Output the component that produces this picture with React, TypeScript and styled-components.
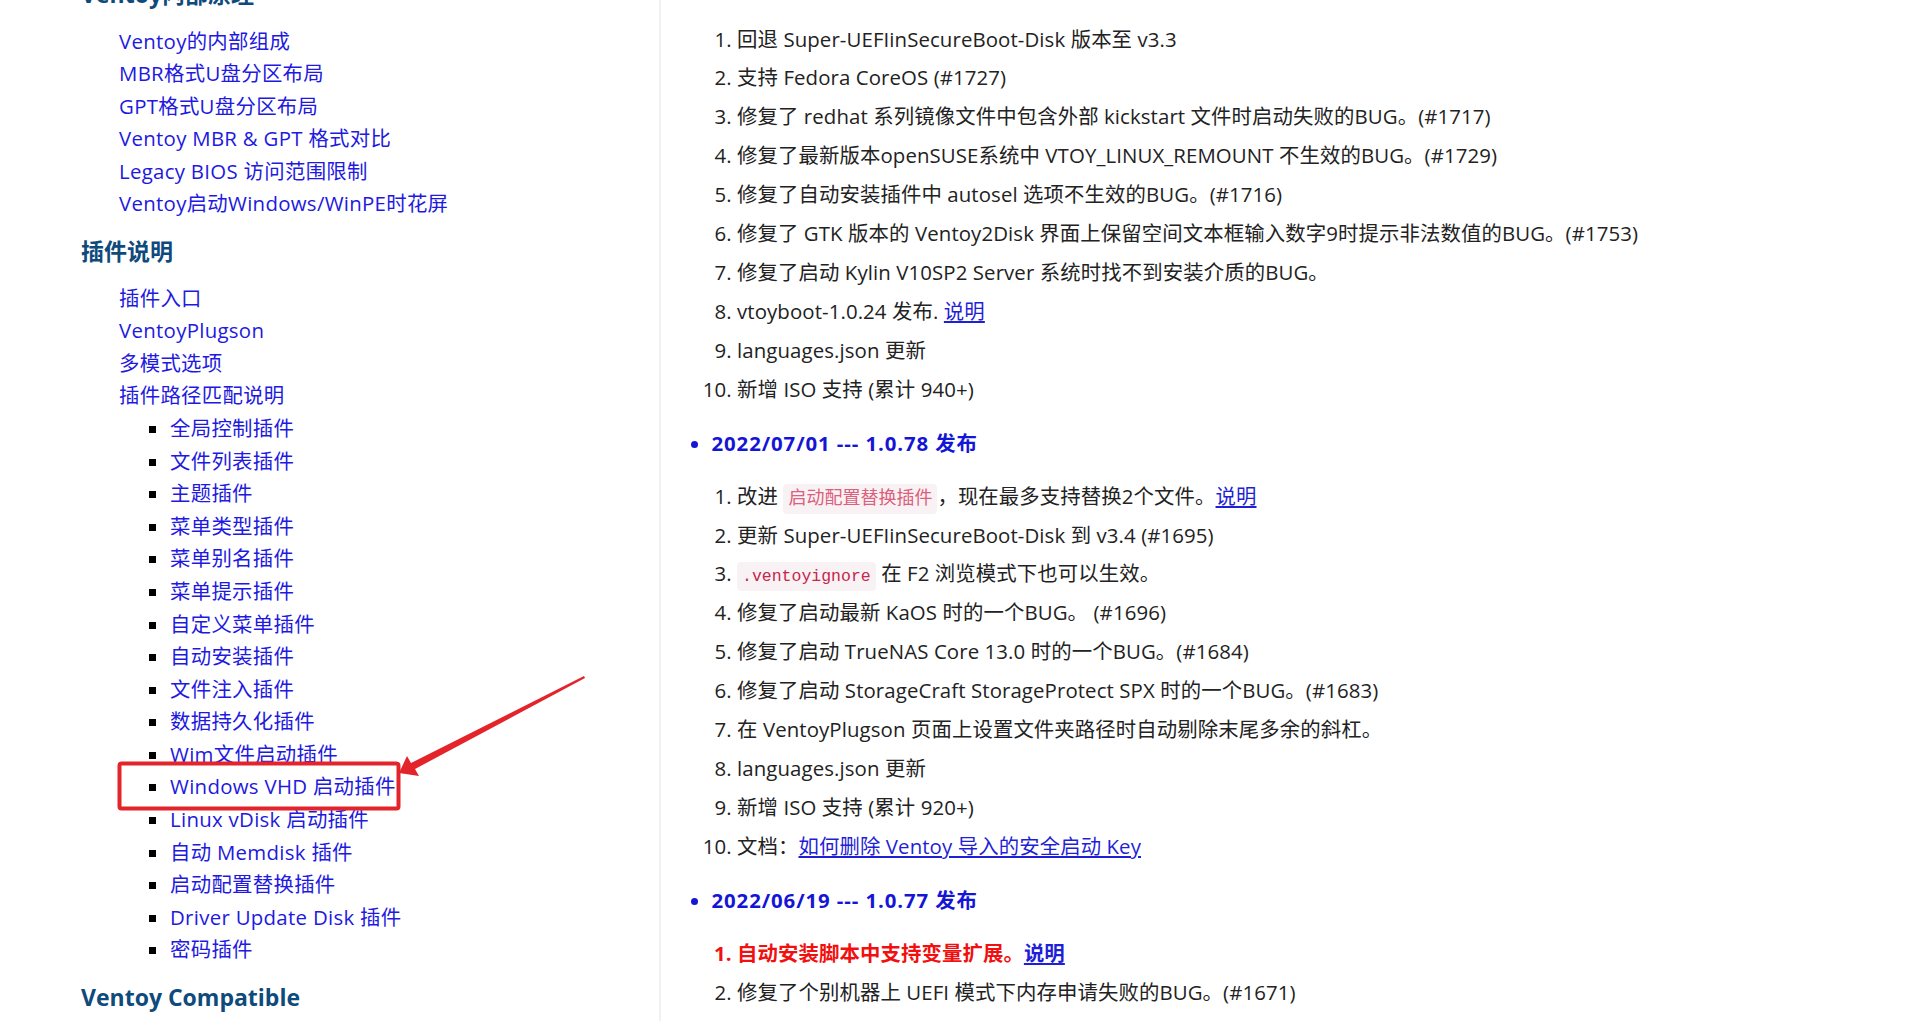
import React from 'react';
import styled, { createGlobalStyle } from 'styled-components';

const GlobalStyle = createGlobalStyle`
  html, body {
    margin: 0;
    padding: 0;
    background: #ffffff;
    overflow: hidden;
  }
  body {
    font-family: "Open Sans", "Noto Sans CJK SC", sans-serif;
  }
`;

const Page = styled.div`
  position: relative;
  display: flex;
  width: 1920px;
  height: 1021px;
  overflow: hidden;
  font-size: 20.4px;
  letter-spacing: 0.1px;
  color: #222222;
`;

const Sidebar = styled.nav`
  flex: none;
  width: 661px;
  box-sizing: border-box;
  border-right: 2px solid #f1f1f1;
  padding-left: 81px;
`;

const SidebarInner = styled.div`
  margin-top: -37px;
`;

const SideHeading = styled.h3`
  margin: 16px 0 15.5px;
  font-size: 23px;
  line-height: 30px;
  font-weight: 700;
  letter-spacing: 0;
  color: #0f4a7d;
`;

const SideList = styled.ul`
  margin: 0;
  padding-left: 38px;
  list-style: none;
`;

const SubList = styled.ul`
  margin: 0;
  padding-left: 51px;
  list-style: square;
  color: #000000;
`;

const SideItem = styled.li`
  line-height: 32.6px;
  letter-spacing: 0.3px;
`;

const SideLink = styled.a`
  color: #2219e0;
  text-decoration: none;
`;

const Content = styled.main`
  flex: 1;
  padding-top: 5.5px;
`;

const ReleaseList = styled.ul`
  margin: 0;
  padding-left: 50.5px;
  color: #1515d6;
`;

const Release = styled.li<{ $plain?: boolean }>`
  margin-top: ${(p) => (p.$plain ? '14px' : '15px')};
  list-style: ${(p) => (p.$plain ? 'none' : 'disc')};
`;

const ReleaseTitle = styled.strong`
  display: block;
  line-height: 38.9px;
  font-weight: 700;
  letter-spacing: 0.9px;
`;

const ChangeList = styled.ol<{ $afterTitle?: boolean }>`
  margin: ${(p) => (p.$afterTitle ? '14.2px' : '1px')} 0 0;
  padding-left: 25.5px;
  color: #222222;
`;

const Change = styled.li<{ $accent?: boolean }>`
  line-height: 38.9px;
  color: ${(p) => (p.$accent ? '#f20f0f' : '#222222')};
  font-weight: ${(p) => (p.$accent ? 700 : 400)};
`;

const TextLink = styled.a`
  color: #1f1fd6;
  text-decoration: underline;
  text-underline-offset: 2px;
`;

const Code = styled.code<{ $cjk?: boolean }>`
  font-family: "Liberation Mono", "Noto Sans CJK SC", monospace;
  font-size: ${(p) => (p.$cjk ? '18px' : '16.5px')};
  line-height: 1;
  letter-spacing: 0;
  color: ${(p) => (p.$cjk ? '#dc5f7c' : '#c7254e')};
  background: #f9f2f4;
  padding: 5px 5px;
  border-radius: 4px;
`;

const Overlay = styled.svg`
  position: absolute;
  left: 0;
  top: 0;
  width: 1920px;
  height: 1021px;
  pointer-events: none;
`;

type Item = { label: string; children?: string[] };

const internals: Item[] = [
  { label: 'Ventoy的内部组成' },
  { label: 'MBR格式U盘分区布局' },
  { label: 'GPT格式U盘分区布局' },
  { label: 'Ventoy MBR & GPT 格式对比' },
  { label: 'Legacy BIOS 访问范围限制' },
  { label: 'Ventoy启动Windows/WinPE时花屏' },
];

const plugins: Item[] = [
  { label: '插件入口' },
  { label: 'VentoyPlugson' },
  { label: '多模式选项' },
  {
    label: '插件路径匹配说明',
    children: [
      '全局控制插件',
      '文件列表插件',
      '主题插件',
      '菜单类型插件',
      '菜单别名插件',
      '菜单提示插件',
      '自定义菜单插件',
      '自动安装插件',
      '文件注入插件',
      '数据持久化插件',
      'Wim文件启动插件',
      'Windows VHD 启动插件',
      'Linux vDisk 启动插件',
      '自动 Memdisk 插件',
      '启动配置替换插件',
      'Driver Update Disk 插件',
      '密码插件',
    ],
  },
];

const SideSection: React.FC<{ title: string; items?: Item[] }> = ({ title, items }) => (
  <>
    <SideHeading>{title}</SideHeading>
    {items && (
      <SideList>
        {items.map((it) => (
          <SideItem key={it.label}>
            <SideLink href="#">{it.label}</SideLink>
            {it.children && (
              <SubList>
                {it.children.map((c) => (
                  <SideItem key={c}>
                    <SideLink href="#">{c}</SideLink>
                  </SideItem>
                ))}
              </SubList>
            )}
          </SideItem>
        ))}
      </SideList>
    )}
  </>
);

export default function App() {
  return (
    <>
      <GlobalStyle />
      <Page>
        <Sidebar>
          <SidebarInner>
            <SideSection title="Ventoy内部原理" items={internals} />
            <SideSection title="插件说明" items={plugins} />
            <SideSection title="Ventoy Compatible" />
          </SidebarInner>
        </Sidebar>
        <Content>
          <ReleaseList>
            <Release $plain>
              <ChangeList>
                <Change>回退 Super-UEFIinSecureBoot-Disk 版本至 v3.3</Change>
                <Change>支持 Fedora CoreOS (#1727)</Change>
                <Change>修复了 redhat 系列镜像文件中包含外部 kickstart 文件时启动失败的BUG。(#1717)</Change>
                <Change>修复了最新版本openSUSE系统中 VTOY_LINUX_REMOUNT 不生效的BUG。(#1729)</Change>
                <Change>修复了自动安装插件中 autosel 选项不生效的BUG。(#1716)</Change>
                <Change>修复了 GTK 版本的 Ventoy2Disk 界面上保留空间文本框输入数字9时提示非法数值的BUG。(#1753)</Change>
                <Change>修复了启动 Kylin V10SP2 Server 系统时找不到安装介质的BUG。</Change>
                <Change>
                  vtoyboot-1.0.24 发布. <TextLink href="#">说明</TextLink>
                </Change>
                <Change>languages.json 更新</Change>
                <Change>新增 ISO 支持 (累计 940+)</Change>
              </ChangeList>
            </Release>
            <Release>
              <ReleaseTitle>2022/07/01 --- 1.0.78 发布</ReleaseTitle>
              <ChangeList $afterTitle>
                <Change>
                  改进 <Code $cjk>启动配置替换插件</Code>，现在最多支持替换2个文件。<TextLink href="#">说明</TextLink>
                </Change>
                <Change>更新 Super-UEFIinSecureBoot-Disk 到 v3.4 (#1695)</Change>
                <Change>
                  <Code>.ventoyignore</Code> 在 F2 浏览模式下也可以生效。
                </Change>
                <Change>修复了启动最新 KaOS 时的一个BUG。 (#1696)</Change>
                <Change>修复了启动 TrueNAS Core 13.0 时的一个BUG。(#1684)</Change>
                <Change>修复了启动 StorageCraft StorageProtect SPX 时的一个BUG。(#1683)</Change>
                <Change>在 VentoyPlugson 页面上设置文件夹路径时自动剔除末尾多余的斜杠。</Change>
                <Change>languages.json 更新</Change>
                <Change>新增 ISO 支持 (累计 920+)</Change>
                <Change>
                  文档：<TextLink href="#">如何删除 Ventoy 导入的安全启动 Key</TextLink>
                </Change>
              </ChangeList>
            </Release>
            <Release>
              <ReleaseTitle>2022/06/19 --- 1.0.77 发布</ReleaseTitle>
              <ChangeList $afterTitle>
                <Change $accent>
                  自动安装脚本中支持变量扩展。<TextLink href="#">说明</TextLink>
                </Change>
                <Change>修复了个别机器上 UEFI 模式下内存申请失败的BUG。(#1671)</Change>
              </ChangeList>
            </Release>
          </ReleaseList>
        </Content>
        <Overlay viewBox="0 0 1920 1021">
          <rect x="119.5" y="763.5" width="279" height="45" rx="2" fill="none" stroke="#e3242b" strokeWidth="4" />
          <polygon
            points="399,773 407,756 411,763 584,676 585,678 415,769 419,776"
            fill="#e3242b"
          />
        </Overlay>
      </Page>
    </>
  );
}
